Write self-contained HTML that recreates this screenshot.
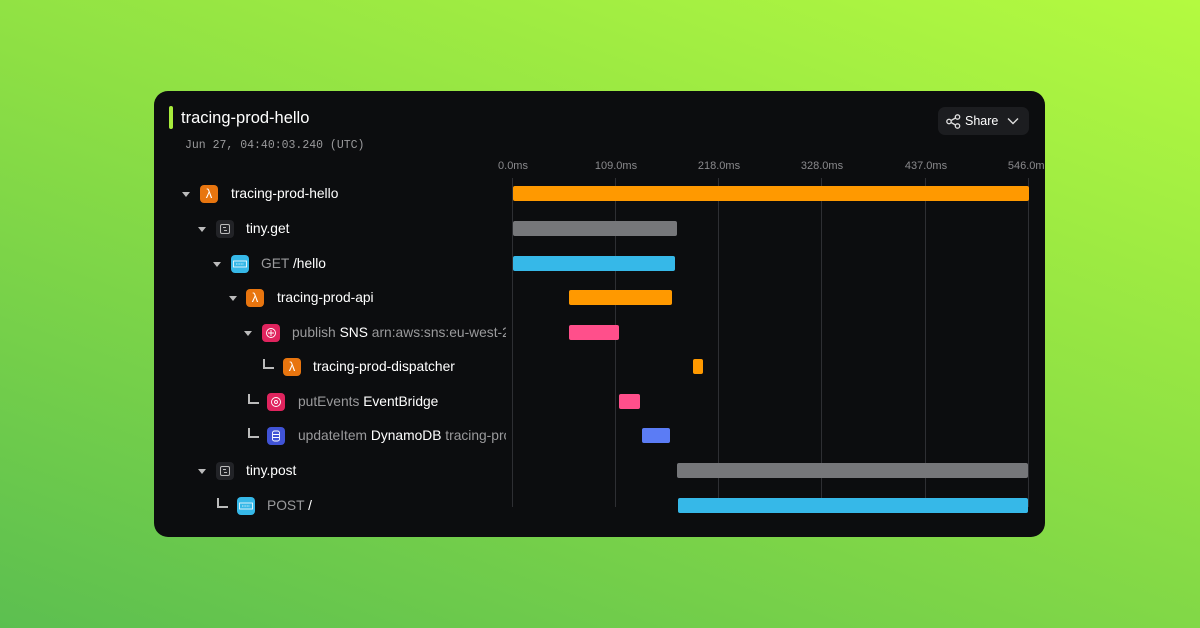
<!DOCTYPE html>
<html><head><style>
body{margin:0;width:1200px;height:628px;overflow:hidden;background:linear-gradient(200deg,#b4fa40 0%,#8ee044 45%,#5cbf50 100%);font-family:"Liberation Sans",sans-serif;position:relative}
.card{position:absolute;left:154px;top:91px;width:891px;height:446px;background:#0c0d0f;border-radius:14px;overflow:hidden}
.abs{position:absolute}
.title{left:27px;top:17px;color:#fff;font-size:16.5px;line-height:20px}
.bar0{left:15px;top:15px;width:4px;height:23px;border-radius:2px;background:#a8ec3c}
.date{left:31px;top:48px;font-family:"Liberation Mono",monospace;font-size:11.5px;color:#9a9a9c}
.share{left:784px;top:16px;width:91px;height:28px;background:#1c1d20;border-radius:7px;color:#fff;font-size:12.5px}
.lbl{top:69px;font-size:11px;color:#8a8a8d;transform:translateX(-50%)}
.grid{top:87px;width:1px;height:329px;background:#2e2f33}
.bar{height:15px;border-radius:2px}
.row{position:absolute;left:0;width:352px;height:20px;overflow:hidden;font-size:13.8px;color:#fff;white-space:nowrap}
.tri{position:absolute;width:0;height:0;border-left:4px solid transparent;border-right:4px solid transparent;border-top:5px solid #bbb}
.ic{position:absolute;width:18px;height:18px;border-radius:4px;top:1px}
.t{position:absolute;top:2px}
.g{color:#9a9a9c}
.cn{position:absolute;width:9px;height:8px;border-left:2px solid #bbb;border-bottom:2px solid #bbb}
</style></head><body>
<div class="card">
<div class="abs bar0"></div>
<div class="abs title">tracing-prod-hello</div>
<div class="abs date">Jun 27, 04:40:03.240 (UTC)</div>
<div class="abs share"><svg class="abs" style="left:8px;top:7px" width="15" height="15" viewBox="0 0 15 15" fill="none" stroke="#ddd" stroke-width="1.3"><circle cx="3" cy="7.5" r="2.2"/><circle cx="11.5" cy="3" r="2.2"/><circle cx="11.5" cy="12" r="2.2"/><path d="M5 6.5 9.5 4M5 8.5 9.5 11"/></svg><span class="abs" style="left:27px;top:7px">Share</span><svg class="abs" style="left:69px;top:9px" width="12" height="10" viewBox="0 0 12 10" fill="none" stroke="#ddd" stroke-width="1.4"><path d="M1 2.5 6 7.5 11 2.5"/></svg></div>

<div class="abs lbl" style="left:359px">0.0ms</div>
<div class="abs lbl" style="left:462px">109.0ms</div>
<div class="abs lbl" style="left:565px">218.0ms</div>
<div class="abs lbl" style="left:668px">328.0ms</div>
<div class="abs lbl" style="left:772px">437.0ms</div>
<div class="abs lbl" style="left:875px">546.0ms</div>
<div class="abs grid" style="left:358px"></div>
<div class="abs grid" style="left:461px"></div>
<div class="abs grid" style="left:564px"></div>
<div class="abs grid" style="left:667px"></div>
<div class="abs grid" style="left:771px"></div>
<div class="abs grid" style="left:874px"></div>

<div class="abs bar" style="left:359px;top:95px;width:516px;background:#ff9900"></div>
<div class="abs bar" style="left:359px;top:130px;width:164px;background:#76777a"></div>
<div class="abs bar" style="left:359px;top:165px;width:162px;background:#36b8e8"></div>
<div class="abs bar" style="left:415px;top:199px;width:103px;background:#ff9900"></div>
<div class="abs bar" style="left:415px;top:234px;width:50px;background:#ff4f8b"></div>
<div class="abs bar" style="left:539px;top:268px;width:10px;background:#ff9900"></div>
<div class="abs bar" style="left:465px;top:303px;width:21px;background:#ff4f8b"></div>
<div class="abs bar" style="left:488px;top:337px;width:28px;background:#5b7cf5"></div>
<div class="abs bar" style="left:523px;top:372px;width:351px;background:#76777a"></div>
<div class="abs bar" style="left:524px;top:407px;width:350px;background:#36b8e8"></div>

<div class="row" style="top:93px"><div class="tri" style="left:28px;top:8px"></div><div class="ic" style="left:46px;background:#e8750f;color:#fff;font-size:13px;text-align:center;line-height:18px">λ</div><span class="t" style="left:77px">tracing-prod-hello</span></div>
<div class="row" style="top:128px"><div class="tri" style="left:44px;top:8px"></div><div class="ic" style="left:62px;background:#222327;border:0"><svg width="18" height="18"><rect x="4.5" y="4.5" width="9" height="9" rx="1.5" fill="none" stroke="#bbb"/><path d="M7 7.5h3M8 10.5h3" stroke="#bbb"/></svg></div><span class="t" style="left:92px">tiny.get</span></div>
<div class="row" style="top:163px"><div class="tri" style="left:59px;top:8px"></div><div class="ic" style="left:77px;background:#36b8e8"><svg width="18" height="18"><rect x="2.5" y="6" width="13" height="6" fill="none" stroke="#fff" stroke-width=".8"/><path d="M5 9h8" stroke="#fff" stroke-width=".8" stroke-dasharray="1 .6"/></svg></div><span class="t" style="left:107px"><span class="g">GET</span> /hello</span></div>
<div class="row" style="top:197px"><div class="tri" style="left:75px;top:8px"></div><div class="ic" style="left:92px;background:#e8750f;color:#fff;font-size:13px;text-align:center;line-height:18px">λ</div><span class="t" style="left:123px">tracing-prod-api</span></div>
<div class="row" style="top:232px"><div class="tri" style="left:90px;top:8px"></div><div class="ic" style="left:108px;background:#e0245e"><svg width="18" height="18" fill="none" stroke="#fff" stroke-width=".9"><circle cx="9" cy="9" r="4.5"/><path d="M6 9h6M9 6v6"/></svg></div><span class="t" style="left:138px"><span class="g">publish</span> SNS <span class="g">arn:aws:sns:eu-west-2:52</span></span></div>
<div class="row" style="top:266px"><div class="cn" style="left:109px;top:2px"></div><div class="ic" style="left:129px;background:#e8750f;color:#fff;font-size:13px;text-align:center;line-height:18px">λ</div><span class="t" style="left:159px">tracing-prod-dispatcher</span></div>
<div class="row" style="top:301px"><div class="cn" style="left:94px;top:2px"></div><div class="ic" style="left:113px;background:#e0245e"><svg width="18" height="18" fill="none" stroke="#fff" stroke-width=".9"><circle cx="9" cy="9" r="4.5"/><circle cx="9" cy="9" r="1.5"/></svg></div><span class="t" style="left:144px"><span class="g">putEvents</span> EventBridge</span></div>
<div class="row" style="top:335px"><div class="cn" style="left:94px;top:2px"></div><div class="ic" style="left:113px;background:#4053d6"><svg width="18" height="18" fill="none" stroke="#fff" stroke-width=".9"><rect x="5.5" y="4" width="7" height="10" rx="2"/><path d="M6 7.5h6M6 10.5h6"/></svg></div><span class="t" style="left:144px"><span class="g">updateItem</span> DynamoDB <span class="g">tracing-pro</span></span></div>
<div class="row" style="top:370px"><div class="tri" style="left:44px;top:8px"></div><div class="ic" style="left:62px;background:#222327"><svg width="18" height="18"><rect x="4.5" y="4.5" width="9" height="9" rx="1.5" fill="none" stroke="#bbb"/><path d="M7 7.5h3M8 10.5h3" stroke="#bbb"/></svg></div><span class="t" style="left:92px">tiny.post</span></div>
<div class="row" style="top:405px"><div class="cn" style="left:63px;top:2px"></div><div class="ic" style="left:83px;background:#36b8e8"><svg width="18" height="18"><rect x="2.5" y="6" width="13" height="6" fill="none" stroke="#fff" stroke-width=".8"/><path d="M5 9h8" stroke="#fff" stroke-width=".8" stroke-dasharray="1 .6"/></svg></div><span class="t" style="left:113px"><span class="g">POST</span> /</span></div>
</div>
</body></html>
